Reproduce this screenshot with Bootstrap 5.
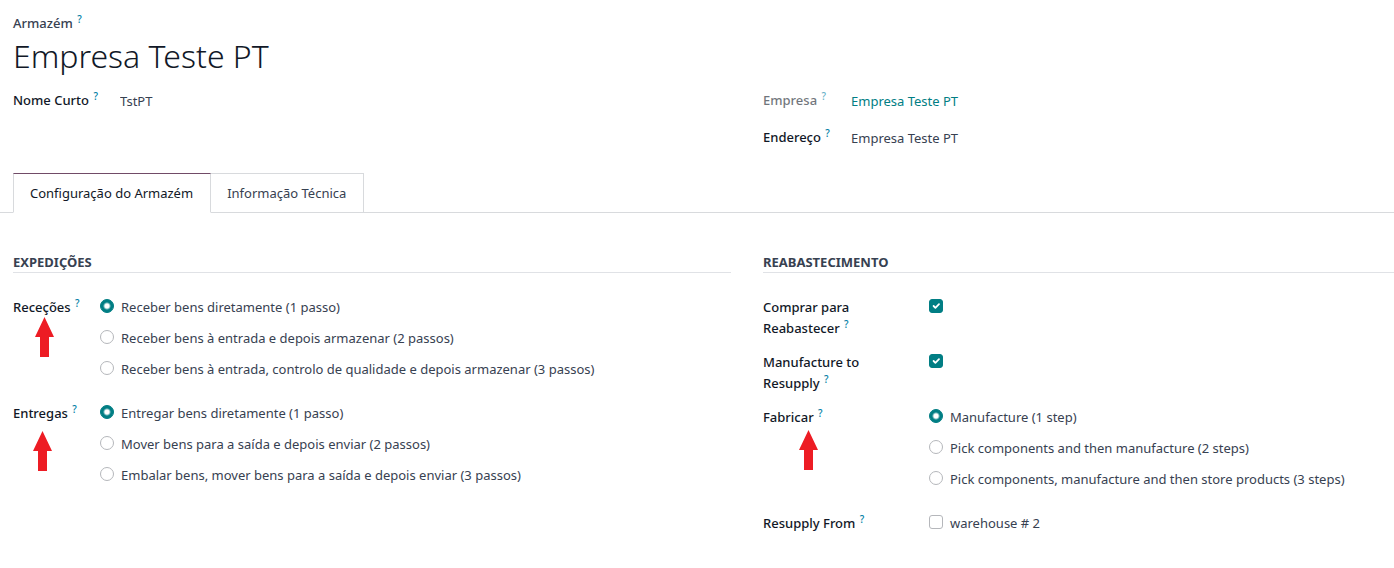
<!DOCTYPE html>
<html lang="pt">
<head>
<meta charset="utf-8">
<meta name="viewport" content="width=device-width, initial-scale=1">
<title>Armazém</title>
<link href="https://cdn.jsdelivr.net/npm/bootstrap@5.3.0/dist/css/bootstrap.min.css" rel="stylesheet">
<style>
  body { font-family: "Noto Sans", "Open Sans", sans-serif; font-size: 13px; line-height: 21px; color: #374151; background: #fff; }
  .sheet { padding-top: 13px; }
  .inset { padding-left: 13px; }
  .two-cols { display: grid; grid-template-columns: minmax(0, 718fr) minmax(0, 631fr); column-gap: 32px; }
  .field-label { color: #111827; font-weight: 500; }
  .title-label { color: #374151; }
  .muted-label { opacity: .6; }
  .help { display: inline-block; color: #0180a5; font-size: 10px; line-height: 10px; font-weight: 500; top: -5px; margin-left: 1px; }
  .plain-input { font-size: 13px; line-height: 21px; color: #374151; padding: 0; border: 0; outline: 0; background: transparent; min-width: 0; }
  .title-input { font-size: 32px; line-height: 44px; color: #111827; font-weight: 300; }
  .head-area { margin-top: 12px; }
  .head-group { display: grid; row-gap: 15px; align-content: start; min-height: 83px; }
  .head-row { display: grid; grid-template-columns: 88px minmax(0, 1fr); }
  .head-row.wide { grid-template-columns: 107px minmax(0, 1fr); }
  .head-row > :last-child { margin-top: 1px; }
  .company-link { color: #017e84; text-decoration: none; }
  .tabs { border-bottom: 1px solid #d8dadd; }
  .tabs .nav-link { background: #fff; border: 1px solid #d8dadd; border-radius: 0; padding: 9px 17px 9px 16px; color: #374151; line-height: 20px; margin-bottom: -1px; }
  .tabs .nav-item + .nav-item .nav-link { border-left: 0; }
  .tabs .nav-link.active { color: #111827; border-color: #714b67 #d8dadd #fff; }
  .section-area { padding-top: 39px; }
  .section-title { font-size: 13px; line-height: 20px; font-weight: 700; border-bottom: 1px solid #e0e2e6; margin: 0 0 24px; text-transform: uppercase; }
  .field-row { display: grid; grid-template-columns: 87px minmax(0, 1fr); margin-bottom: 13px; }
  .field-row.wide { grid-template-columns: 150px minmax(0, 1fr); column-gap: 16px; }
  .choice { display: flex; align-items: flex-start; gap: 7px; margin-bottom: 10px; }
  .choice .form-check-input, .tick { width: 14px; height: 14px; margin: 2px 0 0; flex: none; border-color: #b5b7bb; box-shadow: none; }
  .form-check-input:checked { background-color: #017e84; border-color: #017e84; }
  .form-check-input:checked[type=radio] { background-image: radial-gradient(circle, #fff 2px, transparent 4px); }
  .form-check-input[type=checkbox] { border-radius: 3px; }
  .tick { display: block; }
  .arrow { position: absolute; width: 19px; height: 40px; }
  .arrow-rec { top: 20px; left: 22px; }
  .arrow-ent { top: 28px; left: 20px; }
  .arrow-fab { top: 23px; left: 36px; }
</style>
</head>
<body>
<main class="sheet">
  <div class="inset">
    <label class="field-label title-label d-block" for="wh-name">Armazém <sup class="help">?</sup></label>
    <input class="plain-input title-input d-block w-100" id="wh-name" type="text" value="Empresa Teste PT">
    <div class="two-cols head-area">
      <div class="head-group">
        <div class="head-row wide">
          <label class="field-label" for="wh-code">Nome Curto <sup class="help">?</sup></label>
          <input class="plain-input" id="wh-code" type="text" value="TstPT">
        </div>
      </div>
      <div class="head-group">
        <div class="head-row">
          <span class="field-label muted-label">Empresa <sup class="help">?</sup></span>
          <a class="company-link" href="#">Empresa Teste PT</a>
        </div>
        <div class="head-row">
          <label class="field-label" for="wh-address">Endereço <sup class="help">?</sup></label>
          <input class="plain-input" id="wh-address" type="text" value="Empresa Teste PT">
        </div>
      </div>
    </div>
  </div>

  <ul class="nav tabs inset" role="tablist">
    <li class="nav-item" role="presentation"><button class="nav-link active" type="button" role="tab" aria-selected="true">Configuração do Armazém</button></li>
    <li class="nav-item" role="presentation"><button class="nav-link" type="button" role="tab" aria-selected="false">Informação Técnica</button></li>
  </ul>

  <div class="two-cols inset section-area">
    <section>
      <h2 class="section-title">Expedições</h2>
      <div class="field-row">
        <div class="position-relative">
          <span class="field-label" id="l-rec">Receções <sup class="help">?</sup></span>
          <svg class="arrow arrow-rec" viewBox="0 0 19 40" aria-hidden="true"><path fill="#ed1c24" d="M9.5 0 19 20H14V40H5V20H0Z"/></svg>
        </div>
        <div role="radiogroup" aria-labelledby="l-rec">
          <div class="choice"><input class="form-check-input" type="radio" name="rec" id="rec1" checked><label for="rec1">Receber bens diretamente (1 passo)</label></div>
          <div class="choice"><input class="form-check-input" type="radio" name="rec" id="rec2"><label for="rec2">Receber bens à entrada e depois armazenar (2 passos)</label></div>
          <div class="choice"><input class="form-check-input" type="radio" name="rec" id="rec3"><label for="rec3">Receber bens à entrada, controlo de qualidade e depois armazenar (3 passos)</label></div>
        </div>
      </div>
      <div class="field-row">
        <div class="position-relative">
          <span class="field-label" id="l-ent">Entregas <sup class="help">?</sup></span>
          <svg class="arrow arrow-ent" viewBox="0 0 19 40" aria-hidden="true"><path fill="#ed1c24" d="M9.5 0 19 20H14V40H5V20H0Z"/></svg>
        </div>
        <div role="radiogroup" aria-labelledby="l-ent">
          <div class="choice"><input class="form-check-input" type="radio" name="ent" id="ent1" checked><label for="ent1">Entregar bens diretamente (1 passo)</label></div>
          <div class="choice"><input class="form-check-input" type="radio" name="ent" id="ent2"><label for="ent2">Mover bens para a saída e depois enviar (2 passos)</label></div>
          <div class="choice"><input class="form-check-input" type="radio" name="ent" id="ent3"><label for="ent3">Embalar bens, mover bens para a saída e depois enviar (3 passos)</label></div>
        </div>
      </div>
    </section>

    <section>
      <h2 class="section-title">Reabastecimento</h2>
      <div class="field-row wide">
        <label class="field-label" for="buy">Comprar para Reabastecer <sup class="help">?</sup></label>
        <input class="form-check-input tick" type="checkbox" id="buy" checked>
      </div>
      <div class="field-row wide">
        <label class="field-label" for="manu">Manufacture to Resupply <sup class="help">?</sup></label>
        <input class="form-check-input tick" type="checkbox" id="manu" checked>
      </div>
      <div class="field-row wide">
        <div class="position-relative">
          <span class="field-label" id="l-fab">Fabricar <sup class="help">?</sup></span>
          <svg class="arrow arrow-fab" viewBox="0 0 19 40" aria-hidden="true"><path fill="#ed1c24" d="M9.5 0 19 20H14V40H5V20H0Z"/></svg>
        </div>
        <div role="radiogroup" aria-labelledby="l-fab">
          <div class="choice"><input class="form-check-input" type="radio" name="fab" id="fab1" checked><label for="fab1">Manufacture (1 step)</label></div>
          <div class="choice"><input class="form-check-input" type="radio" name="fab" id="fab2"><label for="fab2">Pick components and then manufacture (2 steps)</label></div>
          <div class="choice"><input class="form-check-input" type="radio" name="fab" id="fab3"><label for="fab3">Pick components, manufacture and then store products (3 steps)</label></div>
        </div>
      </div>
      <div class="field-row wide mb-0">
        <span class="field-label" id="l-from">Resupply From <sup class="help">?</sup></span>
        <div role="group" aria-labelledby="l-from">
          <div class="choice"><input class="form-check-input" type="checkbox" id="wh2"><label for="wh2">warehouse # 2</label></div>
        </div>
      </div>
    </section>
  </div>
</main>
<script src="https://cdn.jsdelivr.net/npm/bootstrap@5.3.0/dist/js/bootstrap.bundle.min.js"></script>
</body>
</html>
